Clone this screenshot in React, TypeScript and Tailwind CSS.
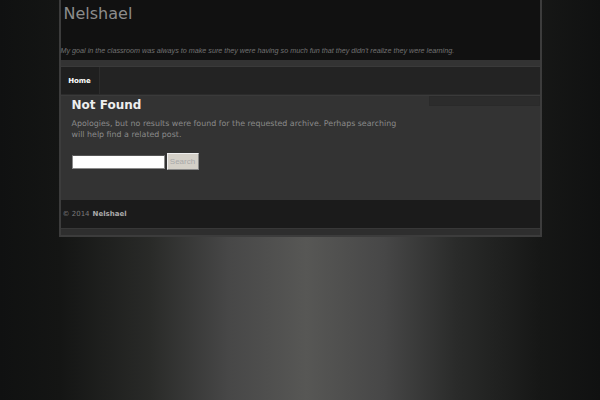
import React from 'react';

const App: React.FC = () => {
  return (
    <div className="min-h-[400px] w-full bg-[linear-gradient(90deg,#101111_0%,#141514_10%,#292a28_25%,#474747_38%,#575755_51%,#474747_64%,#2a2b2a_76%,#161716_90%,#101111_100%)] font-['DejaVu_Sans',sans-serif]">
      <div className="mx-auto w-[483px] border-x-2 border-b-2 border-[#3c3c3c] bg-[#121212]">
        {/* header */}
        <div className="h-[60px] bg-[#111111] relative">
          <div className="pl-[3px] pt-[4px] text-[16px] leading-[20px] text-[#8c8c8c]">Nelshael</div>
          <div className="absolute left-0 top-[46px] font-['Liberation_Sans',sans-serif] text-[7.2px] italic leading-[10px] text-[#727272]">
            My goal in the classroom was always to make sure they were having so much fun that they didn't realize they were learning.
          </div>
        </div>
        <div className="h-[7px] bg-[#333333] border-b border-[#3a3a3a]" />
        {/* nav */}
        <div className="flex h-[28px] bg-[#232323] border-b border-[#2b2b2b]">
          <div className="flex w-[39px] items-center justify-center border-r border-[#2c2c2c] bg-[#1f1f1f] pt-[2px] text-[7px] font-bold text-white">
            Home
          </div>
        </div>
        {/* content */}
        <div className="flex h-[105px] bg-[#333333] border-t border-[#3a3a3a]">
          <div className="flex-1 pl-[11px] pt-[2px]">
            <h1 className="text-[12px] font-bold leading-[14px] text-[#eeeeee]">Not Found</h1>
            <p className="mt-[6px] w-[330px] text-[7.9px] leading-[11px] text-[#8a8a8a]">
              Apologies, but no results were found for the requested archive. Perhaps searching will help find a related post.
            </p>
            <div className="mt-[13px] flex items-center gap-[2px]">
              <input
                type="text"
                className="h-[14px] w-[93px] border border-[#8a8a8a] border-t-[#555] bg-white outline-none"
              />
              <button className="h-[17px] w-[32px] border border-[#888] border-t-[#eee] border-l-[#eee] bg-[#d4d0c8] font-['Liberation_Sans',sans-serif] text-[8px] text-[#a8a8a8]">
                Search
              </button>
            </div>
          </div>
          <div className="w-[111px]">
            <div className="h-[10px] border border-[#2a2a2a] bg-[#2c2c2c]" />
          </div>
        </div>
        {/* footer */}
        <div className="flex h-[28px] items-center bg-[#1b1b1b] pl-[2px] pt-[1px] text-[7px] text-[#7a7a7a]">
          © 2014 <span className="ml-[3px] font-bold text-[#aaaaaa]">Nelshael</span>
        </div>
        <div className="h-[7px] bg-[#2e2e2e] border-t border-[#383838]" />
      </div>
    </div>
  );
};

export default App;
